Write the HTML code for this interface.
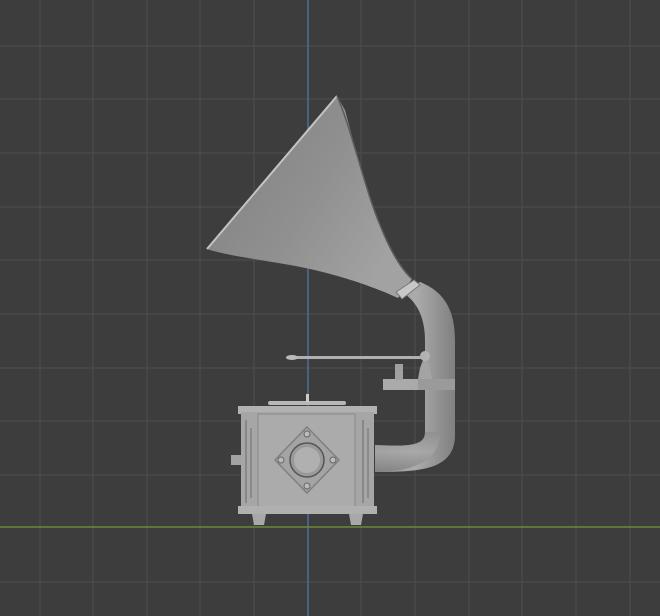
<!DOCTYPE html>
<html><head><style>
html,body{margin:0;padding:0;background:#3d3d3d;width:660px;height:616px;overflow:hidden}
</style></head><body>
<svg width="660" height="616" viewBox="0 0 660 616" xmlns="http://www.w3.org/2000/svg">
<defs>
<linearGradient id="cone" x1="0" y1="0" x2="1" y2="0.6">
<stop offset="0" stop-color="#808080"/><stop offset="0.6" stop-color="#909090"/><stop offset="1" stop-color="#a2a2a2"/></linearGradient>
<linearGradient id="tube" x1="0" y1="0" x2="1" y2="0">
<stop offset="0" stop-color="#8e8e8e"/><stop offset="0.5" stop-color="#acacac"/><stop offset="1" stop-color="#808080"/></linearGradient>
<linearGradient id="tubeh" x1="0" y1="0" x2="0" y2="1">
<stop offset="0" stop-color="#8e8e8e"/><stop offset="0.5" stop-color="#a8a8a8"/><stop offset="1" stop-color="#808080"/></linearGradient>
</defs>
<g stroke="#4b4b4b" stroke-width="1.3">
<line x1="40" y1="0" x2="40" y2="616"/><line x1="93" y1="0" x2="93" y2="616"/><line x1="147" y1="0" x2="147" y2="616"/><line x1="200" y1="0" x2="200" y2="616"/><line x1="254" y1="0" x2="254" y2="616"/><line x1="361" y1="0" x2="361" y2="616"/><line x1="415" y1="0" x2="415" y2="616"/><line x1="469" y1="0" x2="469" y2="616"/><line x1="522" y1="0" x2="522" y2="616"/><line x1="576" y1="0" x2="576" y2="616"/><line x1="630" y1="0" x2="630" y2="616"/>
<line x1="0" y1="46" x2="660" y2="46"/><line x1="0" y1="99" x2="660" y2="99"/><line x1="0" y1="153" x2="660" y2="153"/><line x1="0" y1="207" x2="660" y2="207"/><line x1="0" y1="260" x2="660" y2="260"/><line x1="0" y1="314" x2="660" y2="314"/><line x1="0" y1="368" x2="660" y2="368"/><line x1="0" y1="421" x2="660" y2="421"/><line x1="0" y1="475" x2="660" y2="475"/><line x1="0" y1="582" x2="660" y2="582"/>
</g>
<line x1="308" y1="0" x2="308" y2="616" stroke="#4f6f9a" stroke-width="1.5"/>
<line x1="0" y1="527" x2="660" y2="527" stroke="#6a8a34" stroke-width="1.5"/>
<path d="M402 292 C415 300 425 315 425 340 L425 432 C425 445 415 447 375 445 L375 472 C420 472 455 470 455 435 L455 340 C455 305 440 290 420 282 Z" fill="url(#tube)"/>
<path d="M375 445 C410 447 425 445 425 432 L440 432 C440 462 410 472 375 472 Z" fill="url(#tubeh)" opacity="0.8"/>
<path d="M337 96 L345 110 C352 135 365 190 380 225 C390 250 400 268 412 279 L398 298 C370 285 330 272 290 265 C255 259 225 255 207 249 Z" fill="url(#cone)"/>
<path d="M337 96 L207 249" stroke="#c4c4c4" stroke-width="2"/>
<path d="M337 96 C352 130 365 190 380 225 C390 250 400 268 412 279" stroke="#5c5c5c" stroke-width="1.5" fill="none"/>
<path d="M396 292 L414 280 L420 285 L402 299 Z" fill="#c8c8c8" stroke="#777" stroke-width="1"/>
<rect x="383" y="379" width="72" height="11" fill="#9a9a9a"/>
<rect x="383" y="379" width="35" height="11" fill="#aaa"/>
<rect x="395" y="364" width="8" height="16" fill="#a0a0a0"/>
<path d="M418 379 L420 368 L423 360 L427 360 L430 368 L432 379 Z" fill="#a4a4a4"/>
<circle cx="425" cy="356" r="5" fill="#b4b4b4"/>
<path d="M288 356 L425 356 L425 359 L288 359 Z" fill="#b0b0b0"/>
<ellipse cx="292" cy="357.5" rx="6" ry="2.5" fill="#bbb"/>
<rect x="268" y="401" width="78" height="4" rx="2" fill="#b8b8b8"/>
<rect x="306" y="394" width="3" height="8" fill="#ccc"/>
<rect x="238" y="406" width="139" height="8" fill="#b2b2b2"/>
<rect x="241" y="412" width="133" height="98" fill="#a6a6a6"/>
<rect x="258" y="414" width="97" height="95" fill="#ababab" stroke="#8a8a8a" stroke-width="1"/>
<rect x="245" y="420" width="2" height="83" fill="#888"/><rect x="250" y="428" width="2" height="70" fill="#8a8a8a"/>
<rect x="362" y="420" width="2" height="83" fill="#888"/><rect x="367" y="428" width="2" height="70" fill="#8a8a8a"/>
<rect x="231" y="455" width="10" height="10" fill="#a2a2a2"/>
<rect x="238" y="506" width="139" height="8" fill="#b0b0b0"/>
<path d="M252 514 L266 514 L264 525 L254 525 Z" fill="#a8a8a8"/>
<path d="M349 514 L363 514 L361 525 L351 525 Z" fill="#a8a8a8"/>
<polygon points="307,427 339,460 307,493 275,460" fill="#a4a4a4" stroke="#808080" stroke-width="1.5"/>
<circle cx="307" cy="460" r="17" fill="#9a9a9a" stroke="#555" stroke-width="1.5"/>
<circle cx="307" cy="460" r="13" fill="#b0b0b0"/>
<circle cx="307" cy="434" r="3" fill="#bbb" stroke="#666"/>
<circle cx="307" cy="486" r="3" fill="#bbb" stroke="#666"/>
<circle cx="281" cy="460" r="3" fill="#bbb" stroke="#666"/>
<circle cx="333" cy="460" r="3" fill="#bbb" stroke="#666"/>
</svg>
</body></html>
